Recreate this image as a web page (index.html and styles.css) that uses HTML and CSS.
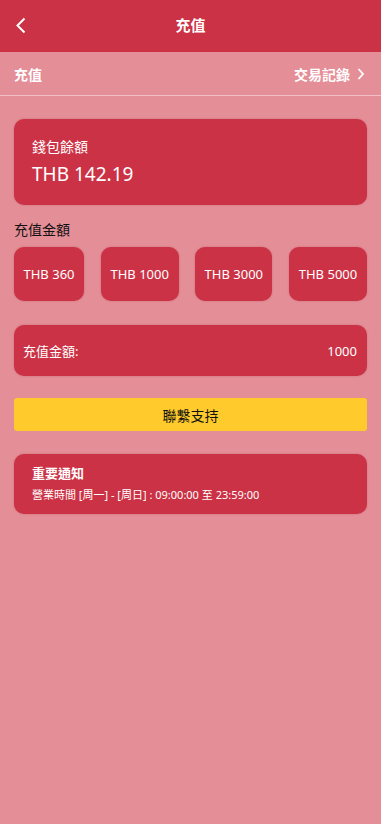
FILE: index.html
```html
<!DOCTYPE html>
<html lang="zh-Hant">
<head>
<meta charset="utf-8">
<title>充值</title>
<link rel="stylesheet" href="styles.css">
</head>
<body>
<div class="page">
  <header class="topbar">
    <span class="back">
      <svg width="12" height="17" viewBox="0 0 12 17"><path d="M9.5 1.5 L2.5 8.5 L9.5 15.5" fill="none" stroke="#fff" stroke-width="2"/></svg>
    </span>
    <h1 class="title">充值</h1>
  </header>
  <div class="subbar">
    <span class="sub-left">充值</span>
    <span class="sub-right">交易記錄
      <svg width="8" height="12" viewBox="0 0 8 12"><path d="M1.5 1 L6 6 L1.5 11" fill="none" stroke="#fff" stroke-width="1.8"/></svg>
    </span>
  </div>
  <main class="content">
    <section class="card balance">
      <div class="balance-label">錢包餘額</div>
      <div class="balance-value">THB 142.19</div>
    </section>
    <div class="section-label">充值金額</div>
    <div class="amounts">
      <button class="amt amt1">THB 360</button>
      <button class="amt amt2">THB 1000</button>
      <button class="amt amt3">THB 3000</button>
      <button class="amt amt4">THB 5000</button>
    </div>
    <div class="card input-row">
      <span>充值金額:</span>
      <span>1000</span>
    </div>
    <button class="support">聯繫支持</button>
    <section class="card notice">
      <div class="notice-title">重要通知</div>
      <div class="notice-text">營業時間 [周一] - [周日] : 09:00:00 至 23:59:00</div>
    </section>
  </main>
</div>
</body>
</html>
```

FILE: styles.css
```css
* { box-sizing: border-box; }
html, body {
  margin: 0;
  padding: 0;
  background: #e48e97;
  font-family: "Noto Sans", "Noto Sans CJK TC", sans-serif;
  color: #fff;
}
.page { width: 381px; min-height: 824px; background: #e48e97; }
.topbar {
  height: 52px;
  background: #cb3245;
  display: flex;
  align-items: center;
  justify-content: center;
  position: relative;
}
.back {
  position: absolute;
  left: 15px;
  top: 17px;
  display: flex;
}
.title {
  margin: 0;
  font-size: 15px;
  font-weight: 700;
  line-height: 1;
  margin-top: -2px;
}
.subbar {
  height: 44px;
  display: flex;
  align-items: center;
  justify-content: space-between;
  padding: 0 16px 0 14px;
  border-bottom: 1px solid #f0c0c5;
  font-size: 14px;
  font-weight: 700;
}
.sub-right { display: flex; align-items: center; gap: 7px; }
.content { padding: 23px 14px 0 14px; }
.card {
  background: #cb3245;
  border-radius: 10px;
  box-shadow: 0 0 2px rgba(150, 40, 55, 0.35);
}
.balance {
  height: 86px;
  padding: 18px 18px 0 18px;
}
.balance-label { font-size: 14px; line-height: 20px; }
.balance-value { font-size: 19px; line-height: 24px; margin-top: 5px; }
.section-label {
  color: #111;
  font-size: 14px;
  line-height: 20px;
  margin-top: 15px;
}
.amounts {
  display: flex;
  justify-content: space-between;
  margin-top: 7px;
}
.amt {
  height: 54px;
  border: none;
  background: #cb3245;
  color: #fff;
  border-radius: 10px;
  font-family: inherit;
  font-size: 13px;
  padding: 0;
  box-shadow: 0 0 2px rgba(150, 40, 55, 0.35);
}
.amt1 { width: 70px; }
.amt2 { width: 78px; }
.amt3 { width: 77px; }
.amt4 { width: 78px; }
.input-row {
  margin-top: 24px;
  height: 51px;
  display: flex;
  align-items: center;
  justify-content: space-between;
  padding: 0 10px 0 9px;
  font-size: 13px;
}
.support {
  display: block;
  width: 100%;
  height: 33px;
  margin-top: 22px;
  border: none;
  background: #ffca2c;
  border-radius: 3px;
  color: #111;
  font-family: inherit;
  font-size: 14px;
  padding: 0;
}
.notice {
  margin-top: 23px;
  height: 60px;
  padding: 10px 18px 0 18px;
}
.notice-title { font-size: 13px; font-weight: 700; line-height: 18px; }
.notice-text { font-size: 11px; line-height: 16px; margin-top: 5px; }
```
